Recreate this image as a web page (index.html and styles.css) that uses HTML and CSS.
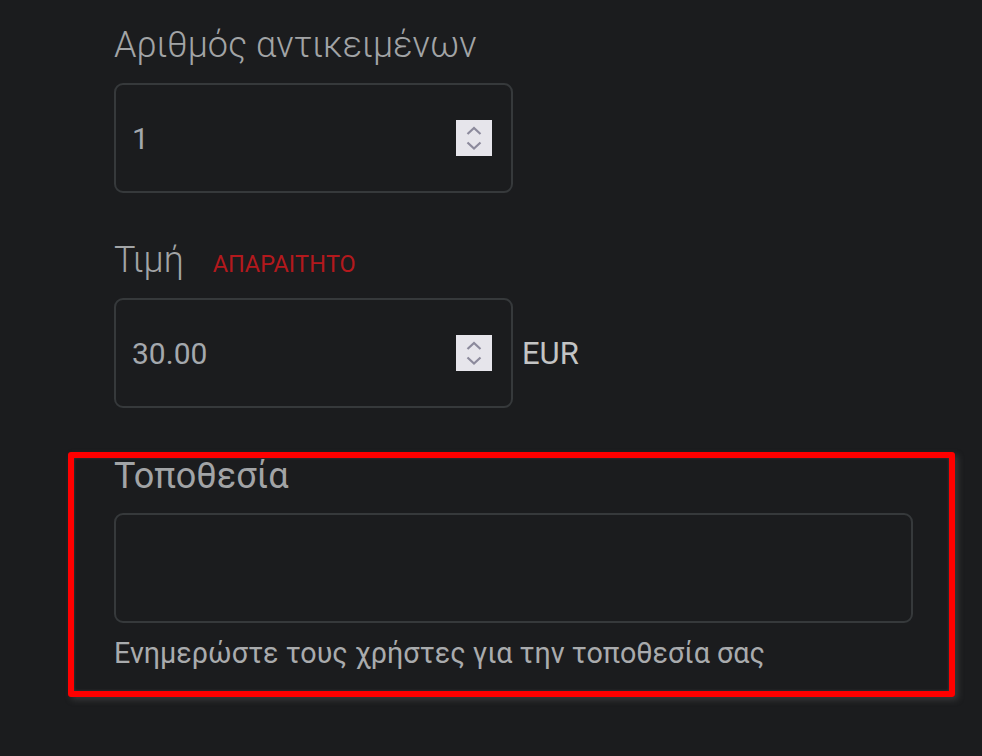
FILE: index.html
```html
<!DOCTYPE html>
<html lang="el">
<head>
<meta charset="utf-8">
<link rel="stylesheet" href="styles.css">
</head>
<body>
<div class="page">
  <div class="field">
    <div class="label"><span class="label-text light">Αριθμός αντικειμένων</span></div>
    <div class="row">
      <div class="input">
        <span class="value">1</span>
        <span class="spinner">
          <svg width="36" height="36" viewBox="0 0 36 36"><path d="M11.5 14 L18 8 L24.5 14" fill="none" stroke="#8c8a9c" stroke-width="2.2"/><path d="M11.5 22.5 L18 28.5 L24.5 22.5" fill="none" stroke="#8c8a9c" stroke-width="2.2"/></svg>
        </span>
      </div>
    </div>
  </div>

  <div class="field">
    <div class="label"><span class="label-text light">Τιμή</span><span class="required">ΑΠΑΡΑΙΤΗΤΟ</span></div>
    <div class="row">
      <div class="input">
        <span class="value">30.00</span>
        <span class="spinner">
          <svg width="36" height="36" viewBox="0 0 36 36"><path d="M11.5 14 L18 8 L24.5 14" fill="none" stroke="#8c8a9c" stroke-width="2.2"/><path d="M11.5 22.5 L18 28.5 L24.5 22.5" fill="none" stroke="#8c8a9c" stroke-width="2.2"/></svg>
        </span>
      </div>
      <span class="unit">EUR</span>
    </div>
  </div>

  <div class="highlight">
    <div class="label"><span class="label-text">Τοποθεσία</span></div>
    <div class="input wide"></div>
    <div class="help">Ενημερώστε τους χρήστες για την τοποθεσία σας</div>
  </div>
</div>
</body>
</html>
```
FILE: styles.css
```css
html, body {
  margin: 0;
  padding: 0;
  background: #1b1c1e;
}
body {
  font-family: Roboto, "Noto Sans", sans-serif;
  width: 982px;
  height: 756px;
  overflow: hidden;
}
.page {
  padding: 27px 0 0 114px;
}
.field {
  margin-bottom: 49px;
}
.field + .field {
  margin-bottom: 44px;
}
.label {
  height: 36px;
  line-height: 36px;
  margin-bottom: 20px;
  display: flex;
  align-items: baseline;
  white-space: nowrap;
}
.highlight .label {
  margin-bottom: 19px;
}
.label-text {
  font-size: 36px;
  color: #a2a4a6;
  font-weight: 400;
}
.label-text.light {
  font-weight: 300;
}
.required {
  margin-left: 29px;
  font-size: 23.5px;
  color: #b3191d;
}
.row {
  display: flex;
  align-items: center;
}
.input {
  box-sizing: border-box;
  width: 399px;
  height: 110px;
  border: 2px solid #36393b;
  border-radius: 9px;
  display: flex;
  align-items: center;
  padding: 0 19px 0 16px;
}
.value {
  flex: 1;
  font-size: 30px;
  color: #a4a8ad;
}
.spinner {
  width: 36px;
  height: 36px;
  background: #e6e5eb;
  display: block;
}
.spinner svg {
  display: block;
}
.unit {
  margin-left: 9px;
  font-size: 31px;
  color: #c3c4c4;
}
.highlight {
  box-sizing: border-box;
  width: 887px;
  height: 245px;
  margin-left: -46px;
  border: 6px solid #ff0000;
  border-radius: 3px;
  padding: 0 36px 0 40px;
  box-shadow: 3px 3px 6px rgba(90, 90, 90, 0.45), inset 0 0 3px rgba(255, 255, 255, 0.15);
}
.input.wide {
  width: 799px;
}
.help {
  margin-top: 13px;
  font-size: 28.7px;
  color: #a9abad;
  white-space: nowrap;
}
```
